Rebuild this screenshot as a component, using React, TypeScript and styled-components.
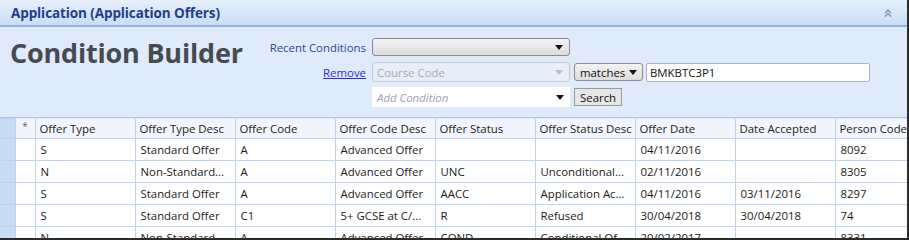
import React from 'react'
import styled, { createGlobalStyle } from 'styled-components'

const GlobalStyle = createGlobalStyle`
    html, body {
        margin: 0;
        padding: 0;
        background: #ffffff;
    }
    body {
        font-family: "Open Sans", "Noto Sans", sans-serif;
        font-size: 11.4px;
    }
`;

const columns = [
    'Offer Type',
    'Offer Type Desc',
    'Offer Code',
    'Offer Code Desc',
    'Offer Status',
    'Offer Status Desc',
    'Offer Date',
    'Date Accepted',
    'Person Code'
]

const rows = [
    ['S', 'Standard Offer', 'A', 'Advanced Offer', '', '', '04/11/2016', '', '8092'],
    ['N', 'Non-Standard...', 'A', 'Advanced Offer', 'UNC', 'Unconditional...', '02/11/2016', '', '8305'],
    ['S', 'Standard Offer', 'A', 'Advanced Offer', 'AACC', 'Application Ac...', '04/11/2016', '03/11/2016', '8297'],
    ['S', 'Standard Offer', 'C1', '5+ GCSE at C/...', 'R', 'Refused', '30/04/2018', '30/04/2018', '74'],
    ['N', 'Non-Standard...', 'A', 'Advanced Offer', 'COND', 'Conditional Of...', '20/02/2017', '', '8331']
]

const Arrow: React.FC<{ muted?: boolean }> = ({ muted }) => (
    <svg width="8" height="5" viewBox="0 0 8 5">
        <path d="M0 0 L8 0 L4 5 Z" fill={muted ? '#b8bec6' : '#111'} />
    </svg>
)

const App: React.FC = () => {
    return (
        <Panel>
            <GlobalStyle />
            <TitleBar>
                <PanelTitle>Application (Application Offers)</PanelTitle>
                <svg width="10" height="10" viewBox="0 0 10 10">
                    <path d="M2 5 L5 2 L8 5 M2 8.5 L5 5.5 L8 8.5" stroke="#7f8fa6" strokeWidth="1.4" fill="none" />
                </svg>
            </TitleBar>
            <Builder>
                <Heading>Condition Builder</Heading>
                <Form>
                    <Label>Recent Conditions</Label>
                    <Select>
                        <span />
                        <Arrow />
                    </Select>
                    <span />
                    <span />

                    <LinkLabel href="#">Remove</LinkLabel>
                    <Select disabled>
                        <span>Course Code</span>
                        <Arrow muted />
                    </Select>
                    <SmallSelect>
                        <span>matches</span>
                        <Arrow />
                    </SmallSelect>
                    <TextInput defaultValue="BMKBTC3P1" />

                    <span />
                    <Combo>
                        <span>Add Condition</span>
                        <Arrow />
                    </Combo>
                    <Button>Search</Button>
                    <span />
                </Form>
            </Builder>
            <GridWrap>
                <Grid>
                    <colgroup>
                        <col style={{ width: 15 }} />
                        <col style={{ width: 20 }} />
                        {columns.map((c) => (
                            <col key={c} style={{ width: 100 }} />
                        ))}
                    </colgroup>
                    <thead>
                        <tr>
                            <RowHead as="th" />
                            <Th>*</Th>
                            {columns.map((c) => (
                                <Th key={c}>{c}</Th>
                            ))}
                        </tr>
                    </thead>
                    <tbody>
                        {rows.map((r, i) => (
                            <tr key={i}>
                                <RowHead />
                                <Td />
                                {r.map((v, j) => (
                                    <Td key={j}>{v}</Td>
                                ))}
                            </tr>
                        ))}
                    </tbody>
                </Grid>
            </GridWrap>
        </Panel>
    )
}

const Panel = styled.div`
    width: 907px;
    height: 238px;
    border-right: 2px solid #2b2b2b;
    border-bottom: 2px solid #2b2b2b;
    background: #dfeafa;
    overflow: hidden;
    display: flex;
    flex-direction: column;
`;

const TitleBar = styled.div`
    height: 27px;
    box-sizing: border-box;
    display: flex;
    align-items: center;
    justify-content: space-between;
    padding: 0 14px 0 11px;
    background: linear-gradient(#e6f0fc, #cadcf4);
    border-bottom: 2px solid #93b3e0;
`;

const PanelTitle = styled.div`
    color: #1e3f8c;
    font-weight: 700;
    font-size: 13.5px;
    letter-spacing: -0.1px;
`;

const Builder = styled.div`
    display: flex;
    align-items: flex-start;
    padding: 9px 0 0 10px;
    height: 90px;
    box-sizing: border-box;
`;

const Heading = styled.h1`
    margin: 0;
    width: 258px;
    font-size: 27px;
    line-height: 32px;
    font-weight: 700;
    color: #474a50;
    letter-spacing: -0.2px;
    padding-top: 1px;
`;

const Form = styled.div`
    display: grid;
    grid-template-columns: 100px 198px 69px 224px;
    grid-auto-rows: 20px;
    column-gap: 4px;
    row-gap: 5px;
    align-items: center;
    margin-top: 1px;
`;

const Label = styled.span`
    color: #2d4a8a;
    text-align: right;
    white-space: nowrap;
    margin-right: 2px;
`;

const LinkLabel = styled.a`
    color: #2b2be0;
    text-decoration: underline;
    text-align: right;
    margin-right: 2px;
`;

const Select = styled.div<{ disabled?: boolean }>`
    height: 18px;
    box-sizing: border-box;
    display: flex;
    align-items: center;
    justify-content: space-between;
    padding: 0 6px 0 4px;
    border: 1px solid ${(p) => (p.disabled ? '#c3ccd6' : '#8c8c8c')};
    border-radius: 3px;
    background: ${(p) => (p.disabled ? '#e6eef8' : 'linear-gradient(#f3f3f3, #dcdcdc)')};
    color: ${(p) => (p.disabled ? '#a6aab0' : '#111')};
    ${(p) => p.disabled && 'height: 20px;'}
`;

const SmallSelect = styled(Select)`
    padding: 0 5px 0 5px;
    color: #111;
`;

const TextInput = styled.input`
    height: 19px;
    box-sizing: border-box;
    width: 224px;
    margin-left: -1px;
    border: 1px solid #a9b4c2;
    border-radius: 2px;
    background: #fff;
    font: inherit;
    color: #111;
    padding: 0 3px;
    outline: none;
`;

const Combo = styled.div`
    height: 20px;
    box-sizing: border-box;
    display: flex;
    align-items: center;
    justify-content: space-between;
    padding: 0 6px 0 5px;
    background: #fff;
    color: #a0a4aa;
    font-style: italic;
`;

const Button = styled.button`
    justify-self: start;
    height: 18px;
    box-sizing: border-box;
    padding: 0 5px;
    font: inherit;
    color: #111;
    background: #e6e6e6;
    border: 1px solid #9a9a9a;
    border-radius: 0;
`;

const GridWrap = styled.div`
    flex: 1;
    overflow: hidden;
    border-top: 1px solid #a9c4e8;
`;

const Grid = styled.table`
    table-layout: fixed;
    border-collapse: collapse;
    width: 935px;
    color: #1a1a1a;
`;

const Th = styled.th`
    height: 19px;
    padding: 0 0 0 4px;
    text-align: left;
    font-weight: 400;
    background: #f2f6fc;
    border: 1px solid #bcd2ee;
    border-top: none;
    white-space: nowrap;
    overflow: hidden;
    color: #222;
    &:nth-child(2) {
        text-align: center;
        padding: 0;
        color: #666;
        vertical-align: top;
        font-size: 10px;
    }
`;

const Td = styled.td`
    height: 21px;
    padding: 0 0 0 5px;
    background: #fff;
    border: 1px solid #bcd2ee;
    white-space: nowrap;
    overflow: hidden;
`;

const RowHead = styled.td`
    background: #c9dcf5;
    border: 1px solid #bcd2ee;
    border-left: none;
    padding: 0;
`;

export default App
